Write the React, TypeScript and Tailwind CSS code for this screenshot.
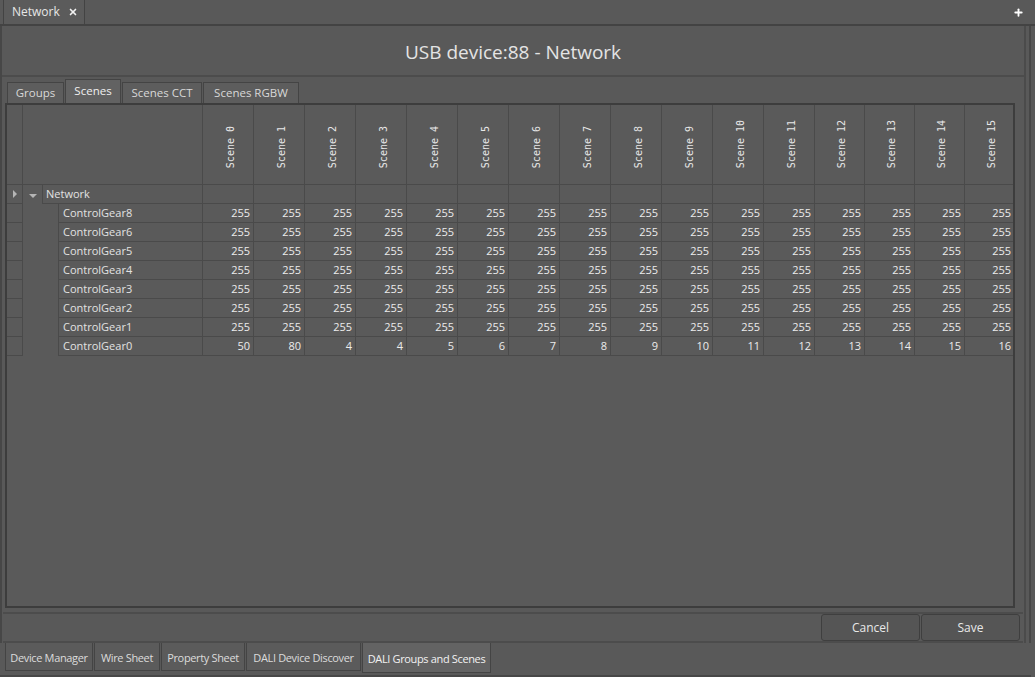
import { X, Plus } from "lucide-react";

const SCENE_COLS = Array.from({ length: 16 }, (_, i) => i);
const COL_W = [51, 51, 51, 51, 51, 51, 51, 51, 51, 51, 51, 51, 50, 50, 50, 50];

const GEARS = [
  { name: "ControlGear8", values: Array(16).fill(255) },
  { name: "ControlGear6", values: Array(16).fill(255) },
  { name: "ControlGear5", values: Array(16).fill(255) },
  { name: "ControlGear4", values: Array(16).fill(255) },
  { name: "ControlGear3", values: Array(16).fill(255) },
  { name: "ControlGear2", values: Array(16).fill(255) },
  { name: "ControlGear1", values: Array(16).fill(255) },
  { name: "ControlGear0", values: [50, 80, 4, 4, 5, 6, 7, 8, 9, 10, 11, 12, 13, 14, 15, 16] },
];

const TOP_TABS = [
  { label: "Groups", w: "w-[57px]" },
  { label: "Scenes", w: "w-[56px]" },
  { label: "Scenes CCT", w: "w-[80px]" },
  { label: "Scenes RGBW", w: "w-[96px]" },
];

const BOTTOM_TABS = [
  { label: "Device Manager", w: "w-[88px]" },
  { label: "Wire Sheet", w: "w-[66px]" },
  { label: "Property Sheet", w: "w-[84px]" },
  { label: "DALI Device Discover", w: "w-[115px]" },
  { label: "DALI Groups and Scenes", w: "w-[129px]" },
];

function SceneHeader() {
  return (
    <div className="flex h-[80px] border-b border-[#4a4a4a]">
      <div className="w-[16px] shrink-0 border-r border-[#4a4a4a]" />
      <div className="w-[180px] shrink-0 border-r border-[#4a4a4a]" />
      {SCENE_COLS.map((i) => (
        <div
          key={i}
          style={{ width: COL_W[i] }}
          className="flex shrink-0 items-end justify-center border-r border-[#4a4a4a] pb-[16px] pl-[5px]"
        >
          <span className="rotate-180 font-['DejaVu_Sans_Mono',monospace] text-[10px] leading-none text-[#e8e8e8] [writing-mode:vertical-rl]">
            Scene {i}
          </span>
        </div>
      ))}
    </div>
  );
}

function NetworkRow() {
  return (
    <div className="flex h-[19px]">
      <div className="flex w-[16px] shrink-0 items-center justify-center border-r border-b border-[#4a4a4a]">
        <span className="h-0 w-0 border-y-[4px] border-l-[4px] border-y-transparent border-l-[#b5b5b5]" />
      </div>
      <div className="flex w-[20px] shrink-0 items-center justify-center border-r border-[#4a4a4a] pt-[2px]">
        <span className="h-0 w-0 border-x-[4px] border-t-[4px] border-x-transparent border-t-[#b5b5b5]" />
      </div>
      <div className="flex w-[160px] shrink-0 items-center border-r border-b border-[#4a4a4a] pl-[3px] text-[11px] text-[#e2e2e2]">
        Network
      </div>
      {SCENE_COLS.map((i) => (
        <div key={i} style={{ width: COL_W[i] }} className="shrink-0 border-r border-b border-[#4a4a4a]" />
      ))}
    </div>
  );
}

function GearRow({ name, values }: { name: string; values: number[] }) {
  return (
    <div className="flex h-[19px]">
      <div className="w-[16px] shrink-0 border-r border-b border-[#4a4a4a]" />
      <div className="w-[36px] shrink-0 border-r border-[#4a4a4a]" />
      <div className="flex w-[144px] shrink-0 items-center border-r border-b border-[#4a4a4a] pl-[4px] text-[11px] text-[#e2e2e2]">
        {name}
      </div>
      {values.map((v, i) => (
        <div
          key={i}
          style={{ width: COL_W[i] }}
          className="flex shrink-0 items-center justify-end border-r border-b border-[#4a4a4a] pr-[3px] text-[11px] text-[#ececec]"
        >
          {v}
        </div>
      ))}
    </div>
  );
}

export default function App() {
  return (
    <div className="flex h-[677px] w-[1035px] flex-col overflow-hidden bg-[#595959] font-['Open_Sans',sans-serif] text-[#dedede]">
      {/* Document tab strip */}
      <div className="flex h-[26px] shrink-0 items-end justify-between border-b-2 border-[#434343] pl-[3px] pr-[11px]">
        <div className="flex h-[25px] w-[82px] items-center gap-[8px] border-x border-t border-[#434343] bg-[#5b5b5b] pl-[8px] text-[12px] text-[#e6e6e6]">
          Network
          <X size={10} strokeWidth={4} className="text-[#f2f2f2]" />
        </div>
        <Plus size={11} strokeWidth={4} className="mb-[6px] text-white" />
      </div>

      {/* View body */}
      <div className="flex min-h-0 flex-1 flex-col pr-[4px]">
        <div className="flex h-[617px] shrink-0 flex-col border-x-2 border-[#474747] pr-[3px]">
          <div className="flex min-h-0 flex-1 flex-col border-r-2 border-[#4b4b4b]">
            {/* Title */}
            <div className="flex h-[51px] shrink-0 items-center justify-center border-b-2 border-[#4c4c4c] pt-[3px] text-[19px] text-[#e4e4e4]">
              USB device:88 - Network
            </div>

            {/* Sub tabs */}
            <div className="flex h-[26px] shrink-0 items-end gap-[1px] pl-[5px] pt-[2px]">
              {TOP_TABS.map((t) => (
                <div
                  key={t.label}
                  className={
                    t.label === "Scenes"
                      ? `flex h-[24px] ${t.w} items-center justify-center border-x border-t border-[#444] bg-[#626262] pb-[1px] text-[11.5px] text-[#f0f0f0]`
                      : `flex h-[21px] ${t.w} items-center justify-center border-x border-t border-[#444] bg-[#5d5d5d] text-[11.5px] text-[#d8d8d8]`
                  }
                >
                  {t.label}
                </div>
              ))}
            </div>

            {/* Table frame */}
            <div className="ml-[3px] mr-[9px] h-[505px] shrink-0 overflow-hidden border-2 border-[#3d3d3d] bg-[#5a5a5a]">
              <SceneHeader />
              <NetworkRow />
              {GEARS.map((g) => (
                <GearRow key={g.name} name={g.name} values={g.values} />
              ))}
            </div>

            {/* Button bar */}
            <div className="mx-[1px] mt-[4px] flex h-[31px] shrink-0 items-center justify-end gap-[1px] border-y-2 border-[#4c4c4c] pr-[3px]">
              {["Cancel", "Save"].map((b) => (
                <button
                  key={b}
                  className="h-[27px] w-[99px] rounded-[3px] border border-[#3f3f3f] bg-[#555555] text-[12px] text-[#e8e8e8]"
                >
                  {b}
                </button>
              ))}
            </div>
          </div>
        </div>

        {/* Bottom view tabs */}
        <div className="flex h-[34px] shrink-0 items-start gap-[1px] border-b-2 border-[#474747] pl-[5px]">
          {BOTTOM_TABS.map((t) => (
            <div
              key={t.label}
              className={
                t.label === "DALI Groups and Scenes"
                  ? `flex h-[30px] ${t.w} items-center justify-center border-x border-b border-[#444] bg-[#636363] pt-[3px] text-[11px] tracking-[-0.35px] text-[#f2f2f2]`
                  : `flex h-[28px] ${t.w} items-center justify-center border-x border-b border-[#444] bg-[#5b5b5b] pt-[3px] text-[11px] tracking-[-0.35px] text-[#dcdcdc]`
              }
            >
              {t.label}
            </div>
          ))}
        </div>
      </div>
    </div>
  );
}
